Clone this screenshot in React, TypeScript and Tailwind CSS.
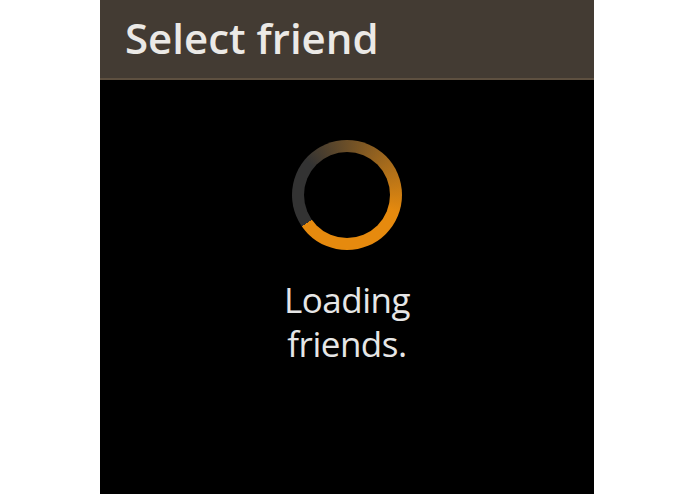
export default function App() {
  return (
    <div className="w-[695px] h-[494px] bg-white flex" style={{ fontFamily: '"Open Sans", "Noto Sans", sans-serif' }}>
      <div className="ml-[100px] w-[494px] h-[494px] bg-black flex flex-col">
        <div className="h-[78px] bg-[#433b33] flex items-center pl-[25px] shrink-0">
          <span className="text-[42px] font-semibold leading-none text-[#ebe9e6] -mt-[2px]">Select friend</span>
        </div>
        <div className="h-[2px] bg-[#5e5040] shrink-0" />
        <div className="flex flex-col items-center pt-[60px]">
          <div className="w-[110px] h-[110px] rounded-full flex items-center justify-center bg-[conic-gradient(from_235deg,#333333_0deg,#333333_75deg,#e68a0e_235deg,#e68a0e_360deg)]">
            <div className="w-[86px] h-[86px] rounded-full bg-black" />
          </div>
          <div className="mt-[28px] text-[35px] leading-[44px] text-[#e6e6e6] text-center tracking-[-0.5px]">
            Loading<br />friends.
          </div>
        </div>
      </div>
    </div>
  );
}
